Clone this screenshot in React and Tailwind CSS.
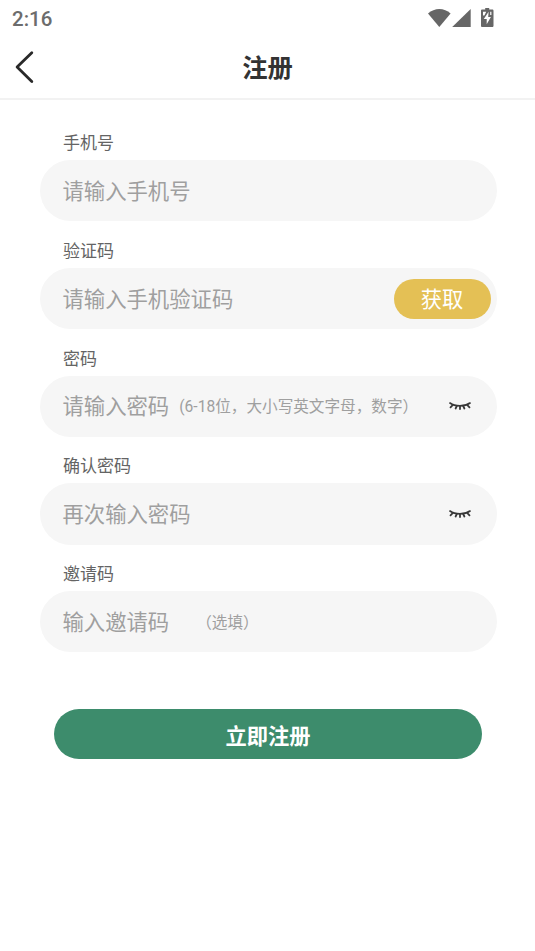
import React from "react";

function ClosedEye() {
  return (
    <svg width="24" height="14" viewBox="0 0 24 14" fill="none" stroke="#383838" strokeWidth="1.8" strokeLinecap="round">
      <path d="M2 4.1C7.2 7.9 16.8 7.9 22 4.1" />
      <path d="M4.9 5.9L2.5 8.3M8.8 7L7.6 9.5M12 7.3V10.1M15.2 7L16.4 9.5M19.1 5.9L21.5 8.3" />
    </svg>
  );
}

function Field({ label, placeholder, hint, hintClass = "", children }) {
  return (
    <div className="mb-[10.5px]">
      <div className="h-9 pl-[23px] pt-px text-[17px] leading-9 text-[#646464]">{label}</div>
      <div className="flex h-[61.25px] items-center rounded-full bg-[#f6f6f6] pl-[22.5px]">
        <span className="whitespace-nowrap pt-[2.5px] text-[21.35px] leading-[30px] text-[#9f9f9f]">{placeholder}</span>
        {hint && (
          <span className={"whitespace-nowrap pt-[2.5px] text-[15.62px] leading-[30px] text-[#9f9f9f] " + hintClass}>{hint}</span>
        )}
        {children}
      </div>
    </div>
  );
}

export default function App() {
  return (
    <div className="h-[951px] w-[535px] overflow-hidden bg-white font-[Roboto,'Noto_Sans_CJK_SC',sans-serif]">
      <div className="flex h-9 items-center justify-between pl-3 pr-[41px]">
        <span className="pt-0.5 text-[20.5px] font-medium leading-none text-[#6c6c6c]">2:16</span>
        <div className="flex items-center text-[#666666]">
          <svg width="66" height="20" viewBox="0 0 66 20" fill="currentColor">
            <path d="M0 5.5C6.5 -0.6 16.2 -0.6 22.6 5.5L11.3 19Z" />
            <path d="M42.7 1V19H24.2Z" />
            <path
              fillRule="evenodd"
              d="M57.2 -0.2h4v1.7h3c.8 0 1.3.5 1.3 1.3v14.9c0 .8-.5 1.3-1.3 1.3h-9.9c-.8 0-1.3-.5-1.3-1.3V2.8c0-.8.5-1.3 1.3-1.3h2.9ZM55 3.8V7.5H56.4L58.2 3.8ZM60.6 3.8L55.8 11h2.9v5.2L62.9 9h-2.7ZM62.2 3.8V7H63.4V3.8Z"
            />
          </svg>
        </div>
      </div>
      <header className="grid h-16 grid-cols-3 items-center border-b-2 border-[#f2f2f2]">
        <button className="ml-[14px] w-6">
          <svg width="22" height="36" viewBox="0 0 22 36" fill="none" stroke="#292929" strokeWidth="2.8" strokeLinecap="round" strokeLinejoin="round">
            <path d="M17.8 3.7L3.1 18L17.8 32.4" />
          </svg>
        </button>
        <h1 className="pt-1 text-center text-[25.3px] font-bold leading-9 text-[#333333]">注册</h1>
      </header>
      <main className="pl-10 pr-[38.5px] pt-6">
        <Field label="手机号" placeholder="请输入手机号" />
        <Field label="验证码" placeholder="请输入手机验证码">
          <button className="ml-auto mr-[6px] mt-px h-10 w-[97px] rounded-full bg-[#e4c055] pt-0.5 text-[21.25px] leading-[38px] text-white">
            获取
          </button>
        </Field>
        <Field label="密码" placeholder="请输入密码" hint="(6-18位，大小写英文字母，数字）" hintClass="ml-[10px]">
          <span className="ml-auto mr-[24.5px]"><ClosedEye /></span>
        </Field>
        <Field label="确认密码" placeholder="再次输入密码">
          <span className="ml-auto mr-[24.5px]"><ClosedEye /></span>
        </Field>
        <Field label="邀请码" placeholder="输入邀请码" hint="（选填）" hintClass="ml-[27px]" />
        <button className="ml-[14px] mt-[46.5px] h-[50px] w-[428px] rounded-full bg-[#3d8c6c] pt-[5px] text-[21.25px] font-bold leading-[45px] text-white">
          立即注册
        </button>
      </main>
    </div>
  );
}
